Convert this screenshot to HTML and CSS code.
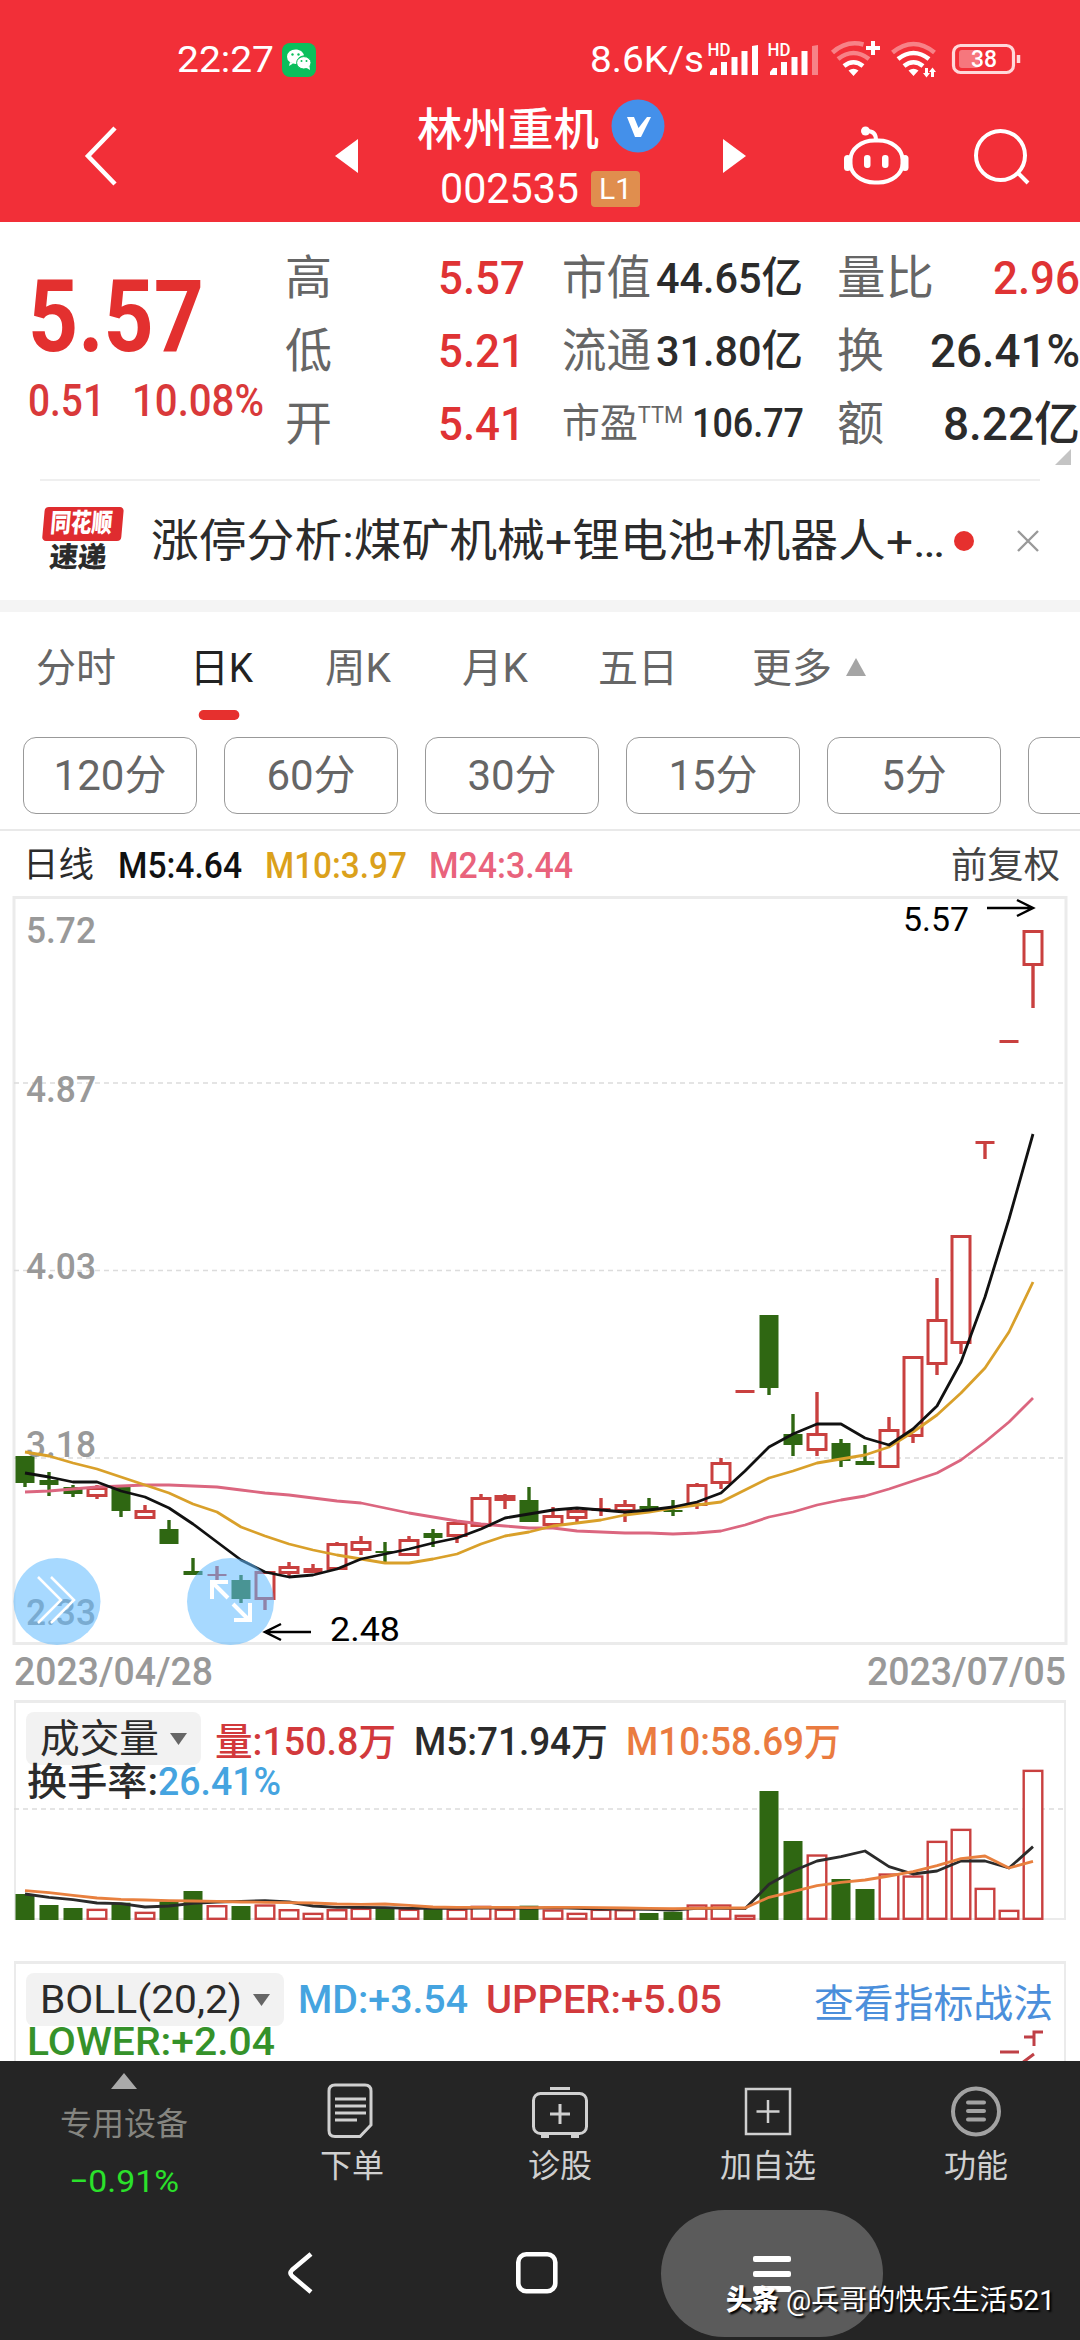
FILE: index.html
```html
<!DOCTYPE html>
<html lang="zh-CN">
<head>
<meta charset="utf-8">
<title>林州重机 002535</title>
<link rel="stylesheet" href="styles.css">
</head>
<body>
<div class="screen">
  <header class="top">
    <div class="status">
      <div class="status-left">
        <span class="clock" data-w="97">22:27</span>
        <svg class="wechat" viewBox="0 0 34 34"><rect width="34" height="34" rx="8" fill="#0bbf5c"/><path d="M13.500 6.500a8.500 7.200 0 1 0 0 14.400l2-.2-.5-2.200a8 7 0 0 1 7-6.200c-.8-3.400-4.200-5.800-8.500-5.800z" fill="#fff"/><path d="M8 19l-1 4 4-2.500z" fill="#fff"/><ellipse cx="21.800" cy="19.800" rx="7.200" ry="6.200" fill="#fff" stroke="#0bbf5c"/><path d="M24 24.500l4 2.500-.5-4z" fill="#fff"/><circle cx="10.500" cy="11.500" r="1.200" fill="#0bbf5c"/><circle cx="16.500" cy="11.500" r="1.200" fill="#0bbf5c"/><circle cx="19.500" cy="18" r="1" fill="#0bbf5c"/><circle cx="24.500" cy="18" r="1" fill="#0bbf5c"/></svg>
      </div>
      <div class="status-right">
        <span class="clock" data-w="114">8.6K/s</span>
        <svg class="status-icons" viewBox="706 38 316 44">
          <g fill="#fff" stroke="none">
            <text x="707.500" y="56" class="hd" textLength="23" lengthAdjust="spacingAndGlyphs">HD</text>
            <text x="767.500" y="56" class="hd" textLength="23" lengthAdjust="spacingAndGlyphs">HD</text>
            <path d="M710 75v-3l3-4h4v7zM721 75V62h6v13zM731.500 75V57h6v18zM741.500 75V51h6v24zM752 75V46l6-1v30z"/>
            <path d="M770 75v-3l3-4h4v7zM781 75V62h6v13zM791.500 75V57h6v18zM801.500 75V51h6v24z"/>
            <path d="M812 75V46l6-1v30z" opacity=".4"/>
            <path d="M853.500 76l-5-5.500q5-3.500 10 0zM913.500 76l-5-5.500q5-3.500 10 0z"/>
            <path d="M871 41h4v5h5v4h-5v5h-4v-5h-5v-4h5z"/>
            <path d="M925 68h3v5h2l-3.500 4.500-3.500-4.500h2zM931 77v-5h-2l3.500-4.500L936 72h-2v5z"/>
          </g>
          <g fill="none" stroke="#fff" stroke-width="4.600">
            <path d="M844 66q9.500-7.500 19 0"/>
            <path d="M838 59q15.500-12 31 0M832.500 52.500q14-12.500 31-8" opacity=".4"/>
            <path d="M904 66q9.500-7.500 19 0M898 59q15.500-12 31 0"/>
            <path d="M892.500 52.500q21-17 42 0" opacity=".4"/>
          </g>
          <rect x="959" y="50" width="20" height="18" rx="3" fill="#fff" opacity=".35"/>
          <rect x="953.500" y="45.500" width="60" height="27" rx="7" fill="none" stroke="#ffd8da" stroke-width="3.200"/>
          <path d="M1018.500 55v8" stroke="#ffd8da" stroke-width="3.500"/>
          <text x="971" y="67" class="batt" textLength="26" lengthAdjust="spacingAndGlyphs">38</text>
        </svg>
      </div>
    </div>
    <div class="nav">
      <svg class="back" viewBox="0 0 40 64"><path d="M34 4L7 32l27 28" fill="none" stroke="#fff" stroke-width="4.500"/></svg>
      <svg class="tri" viewBox="0 0 24 36"><path d="M23 1v34L0 18z" fill="#fff"/></svg>
      <div class="title">
        <div class="title-name"><span data-w="182">林州重机</span>
          <svg class="vbadge" viewBox="0 0 54 54"><circle cx="27" cy="27" r="26.500" fill="#4490ea"/><path d="M16 18h7l4.500 11L36 18h4L30 38h-6z" fill="#fff"/></svg>
        </div>
        <div class="title-code"><span data-w="139">002535</span><b class="level">L1</b></div>
      </div>
      <svg class="tri" viewBox="0 0 24 36"><path d="M1 1v34l23-17z" fill="#fff"/></svg>
      <svg class="robot" viewBox="842 124 68 62"><g fill="none" stroke="#fff" stroke-width="4"><rect x="849.500" y="139.500" width="52" height="42" rx="24" ry="19"/><path d="M866 130q9 0 9 9"/></g><g fill="#fff"><circle cx="864.500" cy="130" r="4.500"/><rect x="863" y="154" width="6.500" height="13" rx="3"/><rect x="881" y="154" width="6.500" height="13" rx="3"/><rect x="843" y="154" width="7" height="16" rx="3.500"/><rect x="900.500" y="154" width="7" height="16" rx="3.500"/></g></svg>
      <svg class="search" viewBox="972 126 58 58"><g fill="none" stroke="#fff" stroke-width="4"><circle cx="999.500" cy="154.500" r="24.500"/><path d="M1016 171l11 11"/></g></svg>
    </div>
  </header>

  <section class="quote">
    <div class="price">
      <div class="price-now" data-w="176">5.57</div>
      <div class="price-diff"><span data-w="77">0.51</span><span data-w="132">10.08%</span></div>
    </div>
    <dl class="facts">
      <dt>高</dt><dd class="up" data-w="87">5.57</dd><dt data-w="89">市值</dt><dd class="mid" data-w="147">44.65亿</dd><dt data-w="97">量比</dt><dd class="up end" data-w="87">2.96</dd>
      <dt>低</dt><dd class="up" data-w="87">5.21</dd><dt data-w="89">流通</dt><dd class="mid" data-w="147">31.80亿</dd><dt>换</dt><dd class="end" data-w="150">26.41%</dd>
      <dt>开</dt><dd class="up" data-w="87">5.41</dd><dt class="pe" data-w="121">市盈<sup>TTM</sup></dt><dd class="pe" data-w="112">106.77</dd><dt>额</dt><dd class="end" data-w="137">8.22亿</dd>
    </dl>
    <svg class="corner" viewBox="0 0 16 16"><path d="M16 0v16H0z" fill="#c4c4c4"/></svg>
  </section>

  <section class="news">
    <div class="news-logo">
      <div class="logo-red"><span data-w="64">同花顺</span></div>
      <div class="logo-dark" data-w="60">速递</div>
    </div>
    <div class="news-text" data-w="794">涨停分析:煤矿机械+锂电池+机器人+…</div>
    <i class="dot"></i>
    <svg class="close" viewBox="0 0 22 22"><path d="M1 1l20 20M21 1L1 21" stroke="#999" stroke-width="2.400"/></svg>
  </section>

  <nav class="tabs">
    <span data-w="80">分时</span><span class="on" data-w="63">日K</span><span data-w="66">周K</span><span data-w="66">月K</span><span data-w="80">五日</span><span data-w="80">更多</span>
    <svg class="more" viewBox="0 0 20 18"><path d="M10 0l10 18H0z" fill="#a5a5a5"/></svg>
    <svg class="gear" viewBox="0 0 46 44"><g fill="none" stroke="#999" stroke-width="4"><path d="M13 3h20q1 0 2 1l8.500 16q1 2 0 4L35 40q-1 1-2 1H13q-1 0-2-1L2.500 24q-1-2 0-4L11 4q1-1 2-1z"/><circle cx="23" cy="22" r="6.500"/></g></svg>
  </nav>
  <div class="minutes"><span>120分</span><span>60分</span><span>30分</span><span>15分</span><span>5分</span><span></span></div>

  <div class="legend">
    <span data-w="71">日线</span><span class="ma5" data-w="124">M5:4.64</span><span class="ma10" data-w="142">M10:3.97</span><span class="ma24" data-w="144">M24:3.44</span><span class="adjust" data-w="109">前复权</span>
  </div>
  <svg class="kline" id="kline" viewBox="0 896 1080 750">
    <g fill="none" stroke="#ebebeb" stroke-width="3"><rect x="14" y="897.500" width="1052" height="746"/></g>
    <g stroke="#dcdcdc" stroke-width="1.500" stroke-dasharray="5 4"><path d="M14 1083h1052M14 1270.500h1052M14 1458h1052"/></g>
    <g id="candles"></g>
    <g class="axis">
      <text x="26" y="943" textLength="70" lengthAdjust="spacingAndGlyphs">5.72</text>
      <text x="26" y="1102" textLength="70" lengthAdjust="spacingAndGlyphs">4.87</text>
      <text x="26" y="1279" textLength="70" lengthAdjust="spacingAndGlyphs">4.03</text>
      <text x="26" y="1457" textLength="70" lengthAdjust="spacingAndGlyphs">3.18</text>
      <text x="26" y="1625" textLength="70" lengthAdjust="spacingAndGlyphs">2.33</text>
    </g>
    <g id="averages"></g>
    <g class="mark">
      <text x="903" y="931" textLength="66" lengthAdjust="spacingAndGlyphs">5.57</text>
      <text x="330" y="1641" textLength="70" lengthAdjust="spacingAndGlyphs">2.48</text>
      <path d="M987 908h46M1017 900l16 8-16 8M311 1632h-46M281 1624l-16 8 16 8"/>
    </g>
    <g fill="#5fbaff" fill-opacity=".55"><circle cx="57" cy="1601.500" r="43.500"/><circle cx="230.500" cy="1601.500" r="43.500"/></g>
    <g fill="none" stroke="#fff"><path stroke-width="2.500" d="M38 1577l23 23-23 23M51 1577l23 23-23 23"/><path stroke-width="4" d="M228 1598l-16-16M228 1582h-16v17M233 1604l16 16M234 1620h16v-17"/></g>
  </svg>
  <div class="dates"><span data-w="199">2023/04/28</span><span data-w="199">2023/07/05</span></div>

  <section class="panel volume">
    <div class="panel-row">
      <span class="pick"><span data-w="119">成交量</span><svg viewBox="0 0 17 12"><path d="M0 0h17L8.500 12z" fill="#666"/></svg></span>
      <span class="red" data-w="181">量:150.8万</span><span data-w="194">M5:71.94万</span><span class="orange" data-w="215">M10:58.69万</span>
    </div>
    <div class="panel-sub"><span data-w="131">换手率:</span><span class="blue" data-w="123">26.41%</span></div>
    <svg class="bars" viewBox="14 1798 1052 122">
      <path d="M14 1809h1052" stroke="#dcdcdc" stroke-width="1.500" stroke-dasharray="5 4"/>
      <g id="bars"></g>
    </svg>
  </section>

  <section class="panel boll">
    <div class="panel-row">
      <span class="pick"><span data-w="202">BOLL(20,2)</span><svg viewBox="0 0 17 12"><path d="M0 0h17L8.500 12z" fill="#666"/></svg></span>
      <span class="blue" data-w="170">MD:+3.54</span><span class="red" data-w="236">UPPER:+5.05</span><span class="link" data-w="239">查看指标战法</span>
    </div>
    <div class="panel-sub"><span class="green" data-w="248">LOWER:+2.04</span></div>
    <svg class="boll-mark" viewBox="996 2024 50 37"><path fill="none" stroke="#bf4046" stroke-width="3" d="M1000 2051h19M1024 2036h10M1034 2045v-14h9M1022 2062l12-9"/></svg>
  </section>

  <footer class="bottom">
    <div class="actions">
      <div class="index"><svg viewBox="0 0 26 16"><path d="M13 0l13 16H0z" fill="#aaa"/></svg><span class="index-name">专用设备</span><span class="index-diff" data-w="110">−0.91%</span></div>
      <div class="action"><svg viewBox="0 0 60 60"><g fill="none" stroke="#d0d0d0" stroke-width="3"><path d="M13 5h30q6 0 6 6v34L38 56.500H13q-6 0-6-6V11q0-6 6-6z"/><path d="M13 19h31M13 26h31M13 33h31M13 40h22"/></g></svg><span>下单</span></div>
      <div class="action"><svg viewBox="0 0 60 60"><g fill="none" stroke="#d0d0d0" stroke-width="3"><rect x="3.500" y="13.500" width="53" height="40" rx="7"/><path d="M20 8.500h20M30 24v20M20 34h20M11 56.500h8M41 56.500h8"/></g></svg><span>诊股</span></div>
      <div class="action"><svg viewBox="0 0 60 60"><g fill="none" stroke="#d0d0d0" stroke-width="2.500"><rect x="8" y="9" width="44" height="45"/><path d="M30 20v23M18.500 31.500h23"/></g></svg><span>加自选</span></div>
      <div class="action"><svg viewBox="0 0 60 60"><g fill="none" stroke="#a2a2a2" stroke-width="4"><circle cx="30" cy="31.500" r="23"/><path stroke-linecap="round" d="M22 22.500h16M22 31h16M22 39.500h16"/></g></svg><span>功能</span></div>
    </div>
    <div class="system">
      <svg class="sys-back" viewBox="0 0 30 44"><path d="M25 3L6 19q-3 3 0 6l19 16" fill="none" stroke="#fff" stroke-width="4.500"/></svg>
      <svg class="sys-home" viewBox="0 0 42 42"><rect x="2.300" y="2.300" width="37" height="37" rx="8" fill="none" stroke="#fff" stroke-width="4.600"/></svg>
      <div class="sys-menu"><i></i><i></i><i></i></div>
      <div class="credit"><b data-w="53">头条</b><span data-w="269">@兵哥的快乐生活521</span></div>
    </div>
  </footer>
</div>
<script src="chart.js"></script>
</body>
</html>
```
FILE: styles.css
```css
* { box-sizing: border-box; }
body { margin: 0; background: #fff; color: #2b2b2b; font-family: Roboto, "Noto Sans CJK SC", sans-serif; }
svg { display: block; flex: none; overflow: visible; }
[data-w] { display: inline-block; white-space: nowrap; transform-origin: 0 50%; flex: none; }
.screen { width: 1080px; height: 2340px; overflow: hidden; display: flex; flex-direction: column; }
.screen > * { flex: none; }

/* header */
.top { height: 222px; background: #f22f38; color: #fff; padding-top: 34px; }
.status { height: 52px; display: flex; justify-content: space-between; align-items: center; padding: 0 58px 0 177px; font-size: 37px; line-height: 52px; }
.status-left, .status-right { display: flex; align-items: center; }
.status-left { gap: 8px; }
.wechat { width: 34px; height: 34px; }
.status-right { gap: 2px; }
.status-icons { width: 316px; height: 44px; }
.hd { font-size: 18px; font-weight: 500; }
.batt { font-size: 23px; font-weight: 500; fill: #fff; }
.nav { display: grid; grid-template-columns: 251px 48px 339px 124px 130px 1fr; padding-left: 81px; height: 136px; align-items: center; }
.nav > svg { margin-top: 4px; }
.back { width: 40px; height: 64px; }
.tri { width: 24px; height: 36px; margin-left: 3px; }
.title { padding: 8px 0 0 37px; }
.title-name { display: flex; align-items: center; gap: 12px; font-size: 45px; font-weight: 500; height: 62px; line-height: 62px; padding-top: 5px; }
.vbadge { width: 54px; height: 54px; margin-top: -9px; }
.title-code { display: flex; align-items: center; gap: 12px; padding-left: 23px; font-size: 42px; height: 60px; line-height: 60px; }
.level { background: #e08e4e; font-size: 30px; line-height: 36px; width: 49px; border-radius: 4px; text-align: center; font-weight: 400; }
.robot { width: 68px; height: 62px; }
.search { width: 58px; height: 58px; }

/* quote */
.quote { height: 256px; position: relative; display: flex; padding: 19px 0 0 28px; margin-bottom: 1px; }
.price { width: 257px; color: #e3302f; padding-top: 24px; }
.price-now { font-size: 100px; font-weight: 700; line-height: 104px; }
.price-diff { display: flex; gap: 27px; font-size: 44px; font-weight: 500; line-height: 64px; color: #d9393a; }
.facts { margin: 0; display: grid; grid-template-columns: 153px 124px 94px 181px 91px 152px; grid-auto-rows: 73px; font-size: 47px; line-height: 74px; }
.facts dt, .facts dd { margin: 0; justify-self: start; }
.facts dt { color: #666; }
.facts dd { font-weight: 500; }
.facts .mid { font-size: 43px; }
.facts .pe { font-size: 40px; }
.facts dd.pe { margin-left: 36px; }
.facts sup { font-size: 23px; line-height: 0; vertical-align: 14px; }
.facts .up { color: #df3334; }
.facts .end { justify-self: end; }
.corner { position: absolute; right: 9px; bottom: 13px; width: 16px; height: 16px; }

/* news */
.news { height: 121px; margin: 0 40px; border-top: 2px solid #efefef; display: flex; align-items: center; }
.news-logo { width: 82px; height: 67px; margin-right: 29px; display: flex; flex-direction: column; align-items: center; font-weight: 900; transform: skewX(-5deg); }
.logo-red { width: 79px; height: 35px; border-radius: 4px; background: #df2c2f; color: #fff; font-size: 26px; line-height: 33px; text-align: center; }
.logo-dark { font-size: 28px; line-height: 33px; }
.news-text { font-size: 45px; line-height: 60px; padding-top: 3px; }
.dot { width: 20px; height: 20px; border-radius: 50%; background: #e6302e; margin-left: 9px; }
.close { width: 22px; height: 22px; margin-left: 43px; }

/* period tabs */
.tabs { height: 134px; margin-bottom: 3px; border-top: 12px solid #f4f4f4; display: grid; grid-template-columns: 154px 135px 137px 136px 154px 92px 170px auto; padding: 9px 0 0 36px; font-size: 40px; line-height: 95px; color: #666; align-items: start; }
.tabs > * { height: 94px; }
.tabs .on { color: #222; position: relative; }
.tabs .on::after { content: ""; position: absolute; left: 9px; bottom: -5px; width: 42px; height: 10px; border-radius: 5px; background: #e6302e; }
.tabs .more { width: 20px; height: 18px; margin: 37px 0 0 2px; }
.tabs .gear { width: 46px; height: 44px; margin: 24px 0 0 80px; }
.minutes { display: flex; gap: 27px; padding-left: 23px; height: 94px; overflow: hidden; border-bottom: 2px solid #e9e9e9; }
.minutes span { flex: none; width: 174px; height: 77px; border: 1.500px solid #999; border-radius: 13px; text-align: center; font-size: 42px; line-height: 75px; color: #666; }
.legend { height: 65px; display: grid; grid-template-columns: 95px 147px 164px 1fr auto; padding: 0 20px 0 23px; font-size: 37px; line-height: 70px; font-weight: 500; }
.legend span:first-child { font-size: 35px; font-weight: 400; }
.ma5 { color: #111; }
.ma10 { color: #dba11b; }
.ma24 { color: #e9637c; }
.legend .adjust { font-weight: 400; font-size: 36px; color: #444; }

/* charts */
.kline { width: 1080px; height: 750px; }
.axis { font-size: 37px; font-weight: 500; fill: #999; }
.mark { font-size: 34px; }
.mark path { fill: none; stroke: #000; stroke-width: 2.500; }
.dates { display: flex; justify-content: space-between; padding: 0 14px; font-size: 38px; line-height: 52px; height: 54px; font-weight: 500; color: #999; }
.panel { position: relative; margin: 0 14px; border: 2px solid #ebebeb; border-top-width: 3px; }
.volume { height: 220px; margin-bottom: 41px; }
.boll { height: 101px; border-bottom: 0; overflow: hidden; }
.panel-row { display: flex; align-items: center; height: 53px; margin: 9px 10px 0 10px; font-size: 38px; font-weight: 500; }
.pick { display: flex; align-items: center; gap: 11px; height: 53px; background: #f2f2f2; border-radius: 8px; padding: 0 14px; font-weight: 400; margin-right: 14px; }
.volume .pick { font-size: 39px; line-height: 48px; }
.pick svg { width: 17px; height: 12px; }
.panel-row > span:nth-child(n+3) { margin-left: 18px; }
.panel-sub { display: flex; margin-left: 11px; font-size: 38px; line-height: 34px; height: 34px; font-weight: 500; }
.boll .panel-sub { line-height: 32px; }
.red { color: #d2393c; }
.orange { color: #ea7b40; }
.blue { color: #45a4e0; }
.green { color: #35922a; }
.panel-row > span.link { margin-left: auto; margin-right: 1px; color: #4b8fdb; font-size: 39px; font-weight: 400; }
.bars { width: 1052px; height: 122px; position: absolute; left: -2px; bottom: -2px; }
.boll-mark { position: absolute; right: 18px; bottom: 0; width: 50px; height: 37px; }

/* bottom bars */
.bottom { height: 279px; background: #252525; color: #d0d0d0; margin-top: -1px; position: relative; }
.actions { display: grid; grid-template-columns: 248px repeat(4, 208px); height: 149px; font-size: 32px; line-height: 44px; }
.index, .action { display: flex; flex-direction: column; align-items: center; }
.index svg { width: 26px; height: 16px; margin-top: 12px; }
.index-name { color: #858580; margin-top: 13px; }
.index-diff { color: #2be12b; margin-top: 13px; }
.action svg { width: 60px; height: 60px; margin-top: 19px; }
.action span { margin-top: 4px; }
.system { height: 130px; position: relative; display: flex; align-items: center; padding-left: 286px; }
.sys-back { width: 30px; height: 44px; margin-top: -5px; }
.sys-home { width: 42px; height: 42px; margin: -5px 0 0 200px; }
.sys-menu { width: 222px; height: 127px; margin: -3px 0 0 103px; background: #5b5b5b; border-radius: 64px; display: flex; flex-direction: column; align-items: center; justify-content: center; gap: 9px; }
.sys-menu i { width: 38px; height: 6px; border-radius: 2px; background: #fff; }
.credit { position: absolute; right: 25px; bottom: 17px; display: flex; gap: 7px; font-size: 28px; line-height: 44px; color: #fff; text-shadow: 2px 2px 2px #000; }
.credit b { font-weight: 900; }
```
FILE: chart.js
```js
const STEP = 24;
const X0 = 25;
const RED = '#c9403f';
const GREEN = '#2f6712';
const x = i => X0 + STEP * i;

// [kind, wick top, body top, body bottom, wick bottom]
const candles = [
  ['g',1456,1456,1483,1487],['g',1472,1480,1485,1496],['g',1485,1487,1494,1497],['r',1485,1487,1497,1499],
  ['g',1487,1487,1511,1517],['r',1505,1510,1519,1519],['g',1520,1529,1544,1544],['g',1558,1571,1575,1575],
  ['r',1566,1574,1576,1581],['g',1575,1580,1599,1603],['r',1571,1571,1600,1610],['r',1562,1566,1574,1576],
  ['r',1564,1568,1573,1573],['r',1542,1543,1570,1570],['r',1536,1541,1551,1555],['g',1542,1551,1553,1562],
  ['r',1536,1539,1556,1556],['g',1529,1533,1538,1547],['r',1521,1522,1537,1543],['r',1494,1497,1527,1527],
  ['r',1494,1495,1501,1509],['g',1487,1500,1522,1522],['r',1507,1515,1526,1526],['r',1509,1510,1519,1522],
  ['r',1498,1508,1511,1516],['r',1500,1504,1512,1522],['g',1498,1506,1509,1513],['g',1500,1510,1512,1516],
  ['r',1483,1484,1506,1509],['r',1458,1462,1484,1489],['r',1390,1390,1393,1393],['g',1315,1315,1388,1395],
  ['g',1414,1434,1445,1456],['r',1392,1433,1451,1456],['g',1439,1443,1461,1467],['g',1445,1461,1465,1465],
  ['r',1417,1429,1468,1468],['r',1356,1356,1437,1443],['r',1278,1319,1365,1375],['r',1235,1235,1344,1354],
  ['r',1141,1141,1144,1159],['r',1040,1040,1043,1043],['r',930,930,966,1008]
];
const averages = [
  ['#111', [1473,1477,1482,1482,1491,1497,1508,1524,1542,1560,1572,1577,1575,1569,1559,1554,1549,1543,1538,1529,1518,1514,1510,1508,1510,1512,1510,1507,1502,1493,1471,1447,1434,1424,1424,1438,1445,1429,1406,1362,1297,1219,1134]],
  ['#d9a02a', [1452,1456,1463,1469,1477,1485,1493,1504,1512,1527,1536,1544,1550,1555,1559,1563,1563,1559,1554,1544,1536,1532,1526,1523,1520,1515,1512,1508,1505,1502,1490,1478,1471,1463,1459,1455,1447,1432,1415,1393,1368,1332,1282]],
  ['#db667f', [1492,1491,1489,1487,1486,1485,1485,1486,1487,1490,1493,1495,1498,1501,1503,1508,1513,1517,1521,1524,1526,1528,1528,1531,1532,1533,1533,1534,1533,1531,1525,1517,1512,1505,1500,1496,1489,1481,1473,1460,1442,1422,1398]]
];
const volumes = [612,645,654,656,638,665,634,603,645,648,643,657,668,657,653,652,656,656,656,647,656,647,658,668,656,657,669,665,643,643,674,303,453,493,567,597,550,556,452,416,593,659,239];
const volumeGreen = new Set([0,1,2,4,6,7,9,15,17,21,26,27,31,32,34,35]);
const volumeAverages = [
  ['#2b2b2b', [612,622,629,639,641,651,648,640,636,634,632,636,648,652,652,653,655,655,655,654,654,655,653,655,657,657,658,660,655,655,656,583,543,513,500,483,530,552,543,513,513,534,470]],
  ['#e8803f', [602,608,616,624,628,630,632,633,634,636,637,638,639,642,643,642,646,651,652,652,652,653,652,652,653,654,655,656,655,654,654,622,605,587,577,570,558,545,527,506,498,534,514]]
];
const volY = v => 1690 + v / 3;

function box(cx, top, bottom, hollow, color, weight) {
  if (!hollow || bottom - top < 2 * weight) {
    return `<rect x="${cx - 9.5}" y="${top}" width="19" height="${bottom - top}" fill="${color}"/>`;
  }
  const h = weight / 2;
  return `<rect x="${cx - 10.5 + h}" y="${top + h}" width="${21 - weight}" height="${bottom - top - weight}" fill="#fff" stroke="${color}" stroke-width="${weight}"/>`;
}
function line(color, ys, weight) {
  return `<polyline fill="none" stroke="${color}" stroke-width="${weight}" stroke-linejoin="round" points="${ys.map((y, i) => x(i) + ',' + y).join(' ')}"/>`;
}

document.getElementById('candles').innerHTML = candles.map(([kind, hi, top, bottom, lo], i) => {
  const color = kind === 'r' ? RED : GREEN;
  return `<path d="M${x(i)} ${hi}V${lo}" stroke="${color}" stroke-width="3.4"/>` + box(x(i), top, bottom, kind === 'r', color, 3);
}).join('');
document.getElementById('averages').innerHTML = averages.slice().reverse().map(([c, ys]) => line(c, ys, 2.8)).join('');
document.getElementById('bars').innerHTML =
  volumes.map((v, i) => box(x(i), volY(v), 1920, !volumeGreen.has(i), volumeGreen.has(i) ? GREEN : RED, 2.4)).join('') +
  volumeAverages.map(([c, ys]) => line(c, ys.map(volY), 2.8)).join('');

// Condense labels to their column widths
document.querySelectorAll('[data-w]').forEach(el => {
  el.style.width = 'max-content';
  const natural = el.getBoundingClientRect().width;
  const target = Number(el.dataset.w);
  el.style.width = target + 'px';
  el.style.transform = `scaleX(${target / natural})`;
});
```
